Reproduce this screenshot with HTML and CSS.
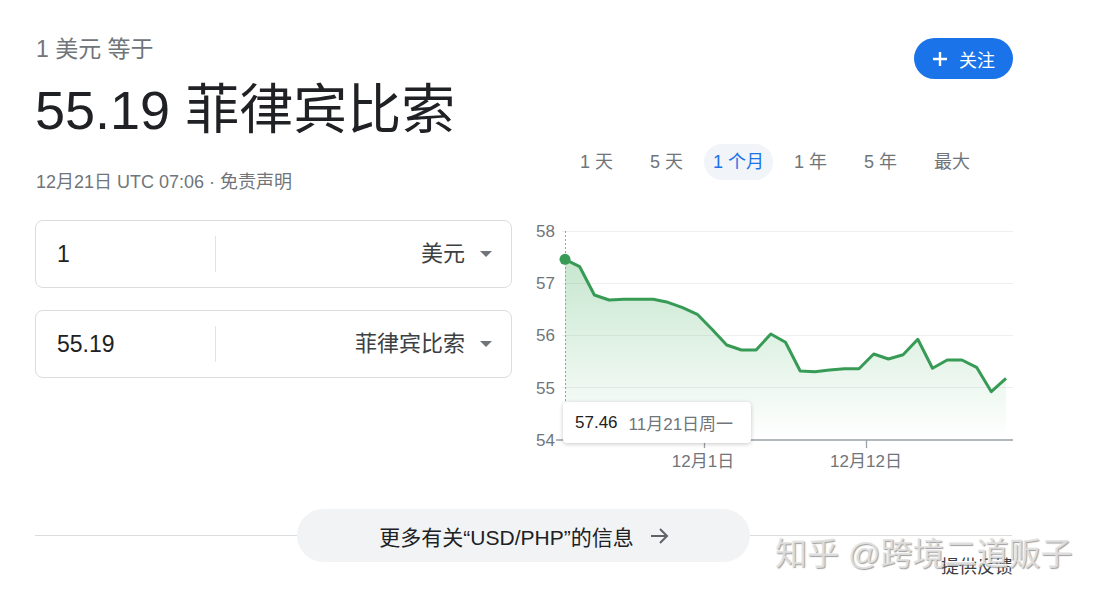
FILE: index.html
```html
<!DOCTYPE html>
<html lang="zh-CN">
<head>
    <meta charset="UTF-8">
    <title>1 美元 等于 55.19 菲律宾比索</title>
    <link rel="stylesheet" href="styles.css">
</head>
<body>
<div class="page">
    <div class="columns">
        <div class="left">
            <div class="subtitle">1 美元 等于</div>
            <div class="headline">55.19 菲律宾比索</div>
            <div class="stamp">12月21日 UTC 07:06 · 免责声明</div>

            <div class="field">
                <div class="amount">1</div>
                <div class="sep"></div>
                <div class="currency">美元<span class="caret"></span></div>
            </div>
            <div class="field">
                <div class="amount">55.19</div>
                <div class="sep"></div>
                <div class="currency">菲律宾比索<span class="caret"></span></div>
            </div>
        </div>

        <div class="right">
            <button class="follow">
                <svg width="16" height="16" viewBox="0 0 16 16"><path d="M8 1v14M1 8h14" stroke="#fff" stroke-width="2.4" fill="none"/></svg>
                关注
            </button>
            <div class="ranges">
                <span class="range">1 天</span>
                <span class="range">5 天</span>
                <span class="range active">1 个月</span>
                <span class="range">1 年</span>
                <span class="range">5 年</span>
                <span class="range">最大</span>
            </div>
            <div class="chart">
                <svg width="483" height="260" viewBox="0 0 483 260">
                    <defs>
                        <linearGradient id="fade" x1="0" y1="0" x2="0" y2="1">
                            <stop offset="0" stop-color="#34a853" stop-opacity="0.28"/>
                            <stop offset="1" stop-color="#34a853" stop-opacity="0"/>
                        </linearGradient>
                    </defs>
                    <!-- grid -->
                    <g stroke="#eeeff1" stroke-width="1">
                        <line x1="32" y1="11.5" x2="483" y2="11.5"/>
                        <line x1="32" y1="63.5" x2="483" y2="63.5"/>
                        <line x1="32" y1="115.5" x2="483" y2="115.5"/>
                        <line x1="32" y1="167.5" x2="483" y2="167.5"/>
                    </g>
                    <g class="ylab" text-anchor="end">
                        <text x="25" y="17">58</text>
                        <text x="25" y="69">57</text>
                        <text x="25" y="121">56</text>
                        <text x="25" y="174">55</text>
                        <text x="25" y="226">54</text>
                    </g>
                    <polygon fill="url(#fade)" points="35,39.3 49.7,46.7 64.4,75 79.1,80 93.8,79.3 108.5,79.3 123.2,79.3 137.9,82.3 152.6,87.7 167.3,94.3 182,109.3 196.7,125 211.4,130 226.1,130 240.8,114 255.5,122.3 270.2,151 284.9,151.7 299.6,150 314.3,148.7 329,148.7 343.7,134 358.4,139 373.1,134.7 387.8,119.3 402.5,148.3 417.2,140 431.9,140 446.6,147.3 461.3,171.7 476,158.3 476,220 35,220"/>
                    <line x1="35.5" y1="11" x2="35.5" y2="184" stroke="#9aa0a6" stroke-width="1" stroke-dasharray="2,2"/>
                    <line x1="26" y1="220" x2="483" y2="220" stroke="#9aa0a6" stroke-width="1.6"/>
                    <line x1="174.5" y1="220" x2="174.5" y2="228" stroke="#9aa0a6" stroke-width="1.3"/>
                    <line x1="336.5" y1="220" x2="336.5" y2="228" stroke="#9aa0a6" stroke-width="1.3"/>
                    <g class="xlab" text-anchor="middle">
                        <text x="173" y="247">12月1日</text>
                        <text x="336" y="247">12月12日</text>
                    </g>
                    <polyline fill="none" stroke="#379b56" stroke-width="3" stroke-linejoin="round" points="35,39.3 49.7,46.7 64.4,75 79.1,80 93.8,79.3 108.5,79.3 123.2,79.3 137.9,82.3 152.6,87.7 167.3,94.3 182,109.3 196.7,125 211.4,130 226.1,130 240.8,114 255.5,122.3 270.2,151 284.9,151.7 299.6,150 314.3,148.7 329,148.7 343.7,134 358.4,139 373.1,134.7 387.8,119.3 402.5,148.3 417.2,140 431.9,140 446.6,147.3 461.3,171.7 476,158.3"/>
                    <circle cx="35" cy="39.3" r="5.5" fill="#379b56"/>
                </svg>
                <div class="tooltip"><span class="tip-value">57.46</span><span class="tip-date">11月21日周一</span></div>
            </div>
        </div>
    </div>

    <div class="more">
        <button class="more-btn">更多有关“USD/PHP”的信息
            <svg width="20" height="20" viewBox="0 0 20 20"><path d="M1 10h16M10 3l7 7-7 7" stroke="#5f6368" stroke-width="2" fill="none"/></svg>
        </button>
    </div>
    <div class="feedback">提供反馈</div>

    <div class="watermark">知乎 @跨境二道贩子</div>
</div>
</body>
</html>
```

FILE: styles.css
```css
body { margin: 0; background: #fff; color: #202124; font-family: "Liberation Sans", Arial, "Noto Sans CJK SC", sans-serif; }
.page { position: relative; width: 978px; padding: 35px 0 0 35px; }
.columns { display: flex; gap: 18px; align-items: flex-start; }

.left { width: 477px; display: flex; flex-direction: column; }
.subtitle { font-size: 23px; line-height: 28px; color: #70757a; padding-left: 1px; }
.headline { font-size: 54px; line-height: 64px; margin-top: 15px; color: #202124; }
.stamp { font-size: 18px; line-height: 24px; margin-top: 28px; color: #70757a; padding-left: 1px; }

.field { height: 66px; border: 1px solid #dadce0; border-radius: 8px; display: flex; align-items: center; margin-top: 22px; }
.stamp + .field { margin-top: 26px; }
.amount { width: 158px; padding-left: 21px; font-size: 23px; color: #202124; }
.sep { width: 1px; height: 36px; background: #e3e3e3; }
.currency { flex: 1; display: flex; align-items: center; justify-content: flex-end; padding-right: 19px; font-size: 22px; line-height: 26px; color: #3c4043; }
.caret { width: 0; height: 0; margin-left: 15px; border-left: 6px solid transparent; border-right: 6px solid transparent; border-top: 6px solid #70757a; }

.right { width: 483px; display: flex; flex-direction: column; }
.follow { align-self: flex-end; margin-top: 3px; height: 41px; width: 99px; border: 0; border-radius: 21px; background: #1a73e8; color: #fff; font-family: inherit; font-size: 18px; display: flex; align-items: center; gap: 11px; padding: 0 0 0 18px; }
.ranges { display: flex; gap: 19px; margin: 65px 0 0 41px; }
.range { height: 36px; line-height: 36px; padding: 0 9px; border-radius: 18px; font-size: 18px; color: #70757a; }
.range.active { margin: 0 -7px; color: #1a73e8; background: #f1f4f8; }

.chart { position: relative; margin-top: 40px; height: 260px; }
.chart svg { display: block; overflow: visible; }
.ylab text, .xlab text { font-size: 17px; fill: #70757a; font-family: "Liberation Sans", "Noto Sans CJK SC", sans-serif; }
.tooltip { position: absolute; left: 33px; top: 182px; height: 41px; width: 188px; box-sizing: border-box; padding-left: 12px; display: flex; align-items: center; gap: 11px; background: #fff; border-radius: 4px; box-shadow: 0 1px 4px rgba(0, 0, 0, 0.22); font-size: 17px; }
.tip-value { color: #202124; }
.tip-date { color: #70757a; }

.more { margin-top: 29px; width: 977px; display: flex; justify-content: center; background: linear-gradient(#dadce0, #dadce0) center / 100% 1px no-repeat; }
.more-btn { width: 453px; height: 53px; border: 0; border-radius: 27px; background: #f1f3f4; color: #202124; font-family: inherit; font-size: 21px; display: flex; align-items: center; justify-content: center; gap: 16px; padding: 0 0 0 2px; }

.feedback { margin-top: -5px; width: 978px; text-align: right; font-size: 18px; line-height: 20px; color: #3c4043; }

.watermark { position: absolute; left: 775px; top: 535px; font-size: 32px; line-height: 38px; color: rgba(226, 226, 226, 0.9); text-shadow: 1px 1px 1px rgba(120, 120, 120, 0.7), -1px -1px 0 #fff; white-space: nowrap; }
```
